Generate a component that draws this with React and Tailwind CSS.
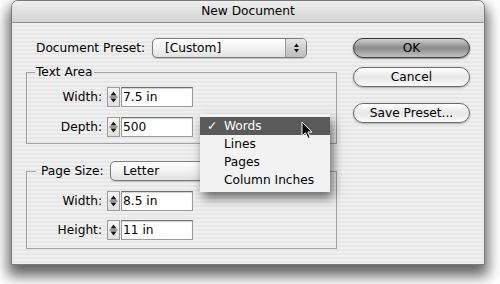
import React from "react";

function Stepper() {
  return (
    <div className="flex h-[20px] w-[13px] items-center justify-center border border-[#9a9a9a] bg-gradient-to-b from-[#f7f7f7] to-[#e0e0e0]">
      <svg width="11" height="18" viewBox="0 0 11 18">
        <path d="M5.5 3.5 L8.5 7.5 L2.5 7.5 Z" fill="#1a1a1a" />
        <rect x="1.5" y="8.5" width="8" height="1" fill="#4a4a4a" />
        <path d="M2.5 10.5 L8.5 10.5 L5.5 14.5 Z" fill="#1a1a1a" />
      </svg>
    </div>
  );
}

function Field({ label, value }) {
  return (
    <div className="flex h-[20px] items-center">
      <div className="w-[75px] text-right">{label}</div>
      <div className="ml-[5px] flex">
        <Stepper />
        <div className="ml-[1px] h-[20px] w-[72px] border border-[#9a9a9a] border-t-[#707070] bg-white pl-[1px] leading-[18px] shadow-[inset_0_1px_1px_rgba(0,0,0,0.18)]">
          {value}
        </div>
      </div>
    </div>
  );
}

function PopupArrows() {
  return (
    <svg width="7" height="12" viewBox="0 0 7 12">
      <path d="M3.5 1.5 L6 5 L1 5 Z" fill="#111" />
      <path d="M1 7 L6 7 L3.5 10.5 Z" fill="#111" />
    </svg>
  );
}

function Popup({ label, width }) {
  return (
    <div
      className={`flex h-[20px] ${width} rounded-[5px] border border-[#7d7d7d] bg-gradient-to-b from-[#ffffff] via-[#f2f2f2] to-[#e0e0e0] shadow-[0_1px_1px_rgba(0,0,0,0.18)]`}
    >
      <div className="flex-1 pl-[12px] leading-[18px]">{label}</div>
      <div className="flex w-[21px] items-center justify-center rounded-r-[4px] border-l border-[#9a9a9a] bg-gradient-to-b from-[#e6e6e6] via-[#cfcfcf] to-[#bdbdbd]">
        <PopupArrows />
      </div>
    </div>
  );
}

function Button({ children, primary }) {
  return (
    <div
      className={
        primary
          ? "flex h-[20px] w-[117px] items-center justify-center rounded-full border border-[#3a3a3a] bg-gradient-to-b from-[#cfcfcf] via-[#8a8a8a] to-[#c4c4c4] shadow-[0_1px_2px_rgba(0,0,0,0.4)]"
          : "flex h-[20px] w-[117px] items-center justify-center rounded-full border border-[#6c6c6c] bg-gradient-to-b from-[#ffffff] via-[#e7e7e7] to-[#fbfbfb] shadow-[0_1px_2px_rgba(0,0,0,0.3)]"
      }
    >
      {children}
    </div>
  );
}

export default function App() {
  return (
    <div className="relative h-[284px] w-[500px] overflow-hidden bg-white font-['DejaVu_Sans',Verdana,sans-serif] text-[12.2px] text-black">
      <div className="ml-[11px] flex h-[265px] w-[474px] flex-col rounded-t-[7px] border border-[#7a7a7a] bg-[#ececec] shadow-[0_8px_14px_3px_rgba(0,0,0,0.62)]">
        <div className="h-[22px] shrink-0 rounded-t-[6px] border-b border-[#8e8e8e] bg-gradient-to-b from-[#efefef] to-[#d2d2d2] text-center leading-[21px]">
          New Document
        </div>
        <div className="flex flex-1 bg-[#ececec] bg-[image:repeating-linear-gradient(180deg,#f0f0f0_0px,#f0f0f0_2px,#e7e7e7_2px,#e7e7e7_4px)] pl-[14px] pr-[14px] pt-[15px]">
          <div className="flex w-[311px] flex-col">
            <div className="flex h-[20px] items-center pl-[10px]">
              <div className="w-[116px]">Document Preset:</div>
              <Popup label="[Custom]" width="w-[155px]" />
            </div>
            <fieldset className="mt-[6px] border border-[#a2a2a2] px-0 pb-[6px] pt-[7px]">
              <legend className="ml-[8px] h-[16px] px-[1px] leading-[16px]">Text Area</legend>
              <div className="flex flex-col gap-[10px]">
                <Field label="Width:" value="7.5 in" />
                <Field label="Depth:" value="500" />
              </div>
            </fieldset>
            <fieldset className="mt-[17px] border border-[#a2a2a2] px-0 pb-[8px] pt-[10px]">
              <legend className="ml-[9px] flex h-[20px] items-center pl-[5px] pr-[3px]">
                <div className="w-[69px]">Page Size:</div>
                <Popup label="Letter" width="w-[197px]" />
              </legend>
              <div className="flex flex-col gap-[9px]">
                <Field label="Width:" value="8.5 in" />
                <Field label="Height:" value="11 in" />
              </div>
            </fieldset>
          </div>
          <div className="ml-[16px] flex flex-col">
            <Button primary>OK</Button>
            <div className="mt-[9px]">
              <Button>Cancel</Button>
            </div>
            <div className="mt-[16px]">
              <Button>Save Preset...</Button>
            </div>
          </div>
        </div>
      </div>

      <div className="absolute left-[200px] top-[114px] w-[130px] bg-[#f2f2f2] py-[3px] shadow-[3px_6px_10px_rgba(0,0,0,0.55)]">
        <div className="flex h-[18px] items-center bg-[#5a5a5a] text-white">
          <span className="w-[24px] pl-[7px]">✓</span>
          <span>Words</span>
        </div>
        <div className="flex h-[18px] items-center pl-[24px]">Lines</div>
        <div className="flex h-[18px] items-center pl-[24px]">Pages</div>
        <div className="flex h-[18px] items-center pl-[24px]">Column Inches</div>
      </div>

      <svg className="absolute left-[301px] top-[121px]" width="13" height="20" viewBox="0 0 13 20">
        <path d="M1 1 L1 15 L4.5 11.8 L7 17.5 L9.2 16.6 L6.8 11 L11 11 Z" fill="#000" stroke="#fff" strokeWidth="1" />
      </svg>
    </div>
  );
}
